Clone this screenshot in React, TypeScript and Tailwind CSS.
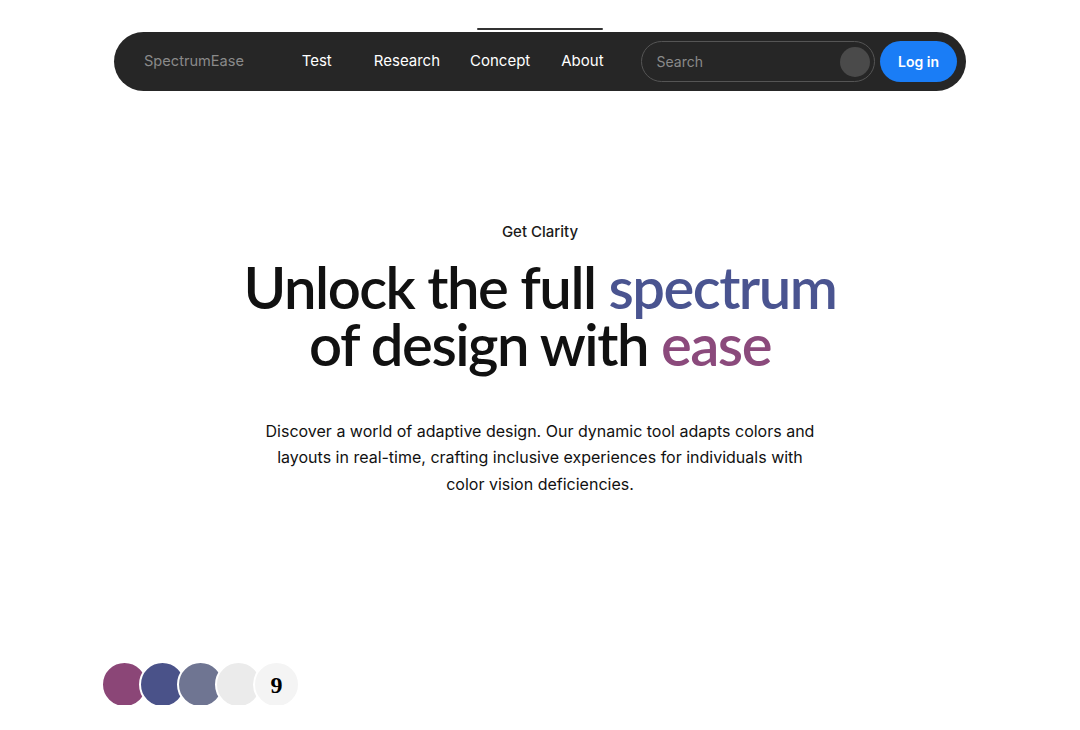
import React from "react";

const navLinks = ["Test", "Research", "Concept", "About"];

const swatches = [
  { color: "bg-[#8b4677]", label: "" },
  { color: "bg-[#4a5289]", label: "" },
  { color: "bg-[#6f7592]", label: "" },
  { color: "bg-[#ebebeb]", label: "" },
  { color: "bg-[#f4f4f4]", label: "9" },
];

const Navbar = () => {
  return (
    <div className="relative w-[852px] mx-auto">
      {/* little bar peeking above the nav */}
      <div className="absolute -top-[4px] left-[363px] w-[126px] h-[2px] bg-[#333] rounded-full" />
      <nav className="flex items-center h-[59px] bg-[#262626] rounded-full pl-[30px] pr-[9px] font-['Inter',sans-serif]">
        <span className="text-[14.6px] text-[#8a8a8a] w-[158px]">SpectrumEase</span>
        <ul className="flex items-center text-[15px] text-white">
          {navLinks.map((link, i) => (
            <li
              key={link}
              className={
                i === 0 ? "mr-[42px]" : i === 1 ? "mr-[30px]" : i === 2 ? "mr-[31px]" : ""
              }
            >
              {link}
            </li>
          ))}
        </ul>
        <div className="ml-[37px] flex items-center w-[235px] h-[41px] rounded-full border border-[#555] pl-[15px] pr-[4px]">
          <span className="flex-1 text-[14px] text-[#8a8a8a]">Search</span>
          <div className="w-[30px] h-[30px] rounded-full bg-[#4a4a4a]" />
        </div>
        <button
          type="button"
          className="ml-[5px] w-[77px] h-[41px] rounded-full bg-[#1a7df6] text-white text-[14px] font-semibold"
        >
          Log in
        </button>
      </nav>
    </div>
  );
};

const App = () => {
  return (
    <div className="w-[1080px] h-[730px] bg-white overflow-hidden pt-[32px] font-['Inter',sans-serif]">
      <Navbar />
      <section className="flex flex-col items-center mt-[130px]">
        <p className="text-[15px] font-medium text-[#1a1a1a]">Get Clarity</p>
        <h1 className="mt-[14px] text-center text-[58px] leading-[57px] font-semibold tracking-[-1.5px] text-[#111] font-['Lato',sans-serif]">
          Unlock the full <span className="text-[#4a5490]">spectrum</span>
          <br />
          of design with <span className="text-[#8b4a7c]">ease</span>
        </h1>
        <p className="mt-[46px] w-[556px] text-center text-[16px] leading-[26.5px] text-[#111]">
          Discover a world of adaptive design. Our dynamic tool adapts colors and layouts in
          real-time, crafting inclusive experiences for individuals with color vision
          deficiencies.
        </p>
      </section>
      <div className="mt-[164px] ml-[101px] h-[44px] overflow-hidden">
        <div className="flex">
          {swatches.map((s, i) => (
            <div
              key={i}
              className={`w-[47px] h-[47px] rounded-full border-2 border-white flex items-center justify-center ${s.color} ${
                i === 0 ? "" : "-ml-[9px]"
              }`}
            >
              <span className="text-[24px] font-bold text-black font-['Liberation_Serif',serif]">
                {s.label}
              </span>
            </div>
          ))}
        </div>
      </div>
    </div>
  );
};

export default App;
